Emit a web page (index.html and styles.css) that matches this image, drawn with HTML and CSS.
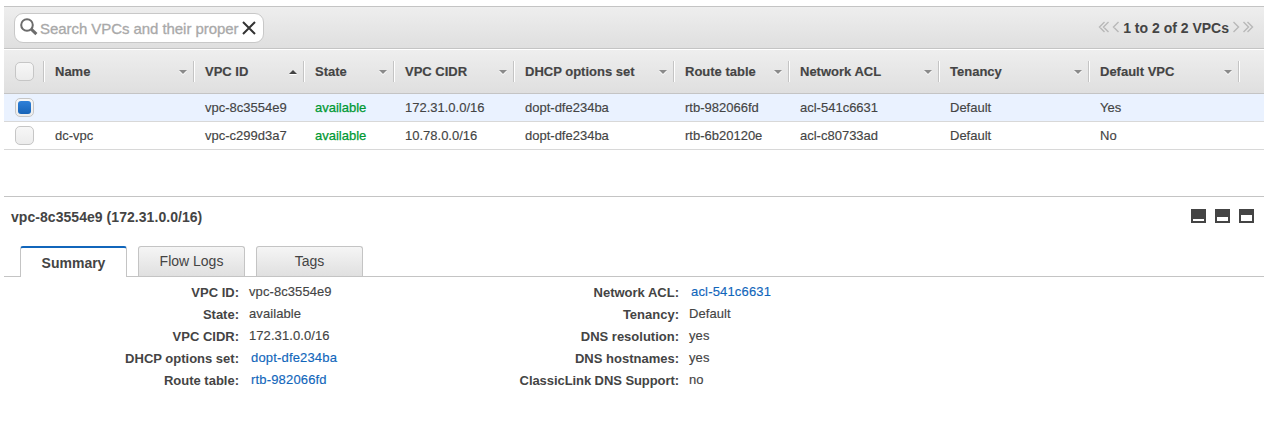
FILE: index.html
```html
<!DOCTYPE html>
<html lang="en">
<head>
<meta charset="utf-8">
<title>VPCs</title>
<link rel="stylesheet" href="styles.css">
</head>
<body>
<main class="console">
  <section class="toolbar">
    <div class="search">
      <svg class="search-icon" width="19" height="19" viewBox="0 0 19 19"><circle cx="7" cy="7" r="5.8" fill="none" stroke="#6c6c6c" stroke-width="2"/><path d="M11.2 11.2L16.4 16.2" stroke="#6c6c6c" stroke-width="3"/></svg>
      <span class="search-text">Search VPCs and their proper</span>
      <svg class="clear" width="14" height="14" viewBox="0 0 14 14"><path d="M1 1L13 13M13 1L1 13" stroke="#333" stroke-width="2"/></svg>
    </div>
    <div class="pager">
      <svg width="22" height="12" viewBox="0 0 22 12" fill="none" stroke="#b8b8b8" stroke-width="1.4"><path d="M6.500 1L1.500 6L6.500 11M10.500 1L5.500 6L10.500 11M20.500 1L15.500 6L20.500 11"/></svg>
      <span class="range">1 to 2 of 2 VPCs</span>
      <svg width="22" height="12" viewBox="0 0 22 12" fill="none" stroke="#b8b8b8" stroke-width="1.4"><path d="M1.500 1L6.500 6L1.500 11M11.500 1L16.500 6L11.500 11M15.500 1L20.500 6L15.500 11"/></svg>
    </div>
  </section>
  <section class="table">
    <div class="row head">
      <div class="cell"><i class="box"></i></div>
      <div class="cell"><span>Name</span><i class="arrow"></i></div>
      <div class="cell"><span>VPC ID</span><i class="arrow up"></i></div>
      <div class="cell"><span>State</span><i class="arrow"></i></div>
      <div class="cell"><span>VPC CIDR</span><i class="arrow"></i></div>
      <div class="cell"><span>DHCP options set</span><i class="arrow"></i></div>
      <div class="cell"><span>Route table</span><i class="arrow"></i></div>
      <div class="cell"><span>Network ACL</span><i class="arrow"></i></div>
      <div class="cell"><span>Tenancy</span><i class="arrow"></i></div>
      <div class="cell"><span>Default VPC</span><i class="arrow"></i></div>
    </div>
    <div class="row selected">
      <div class="cell"><i class="box checked"></i></div>
      <div class="cell"></div>
      <div class="cell">vpc-8c3554e9</div>
      <div class="cell ok">available</div>
      <div class="cell">172.31.0.0/16</div>
      <div class="cell">dopt-dfe234ba</div>
      <div class="cell">rtb-982066fd</div>
      <div class="cell">acl-541c6631</div>
      <div class="cell">Default</div>
      <div class="cell">Yes</div>
    </div>
    <div class="row">
      <div class="cell"><i class="box"></i></div>
      <div class="cell">dc-vpc</div>
      <div class="cell">vpc-c299d3a7</div>
      <div class="cell ok">available</div>
      <div class="cell">10.78.0.0/16</div>
      <div class="cell">dopt-dfe234ba</div>
      <div class="cell">rtb-6b20120e</div>
      <div class="cell">acl-c80733ad</div>
      <div class="cell">Default</div>
      <div class="cell">No</div>
    </div>
  </section>
  <section class="details">
    <header class="details-head">
      <span class="title">vpc-8c3554e9 (172.31.0.0/16)</span>
      <div class="panes"><i class="pane small"></i><i class="pane medium"></i><i class="pane large"></i></div>
    </header>
    <nav class="tabs">
      <div class="tab active">Summary</div>
      <div class="tab">Flow Logs</div>
      <div class="tab">Tags</div>
    </nav>
    <div class="summary">
      <dl class="props">
        <dt>VPC ID:</dt><dd>vpc-8c3554e9</dd>
        <dt>State:</dt><dd>available</dd>
        <dt>VPC CIDR:</dt><dd>172.31.0.0/16</dd>
        <dt>DHCP options set:</dt><dd class="link">dopt-dfe234ba</dd>
        <dt>Route table:</dt><dd class="link">rtb-982066fd</dd>
      </dl>
      <dl class="props">
        <dt>Network ACL:</dt><dd class="link">acl-541c6631</dd>
        <dt>Tenancy:</dt><dd>Default</dd>
        <dt>DNS resolution:</dt><dd>yes</dd>
        <dt>DNS hostnames:</dt><dd>yes</dd>
        <dt class="tight">ClassicLink DNS Support:</dt><dd>no</dd>
      </dl>
    </div>
  </section>
</main>
</body>
</html>
```
FILE: styles.css
```css
* { box-sizing: border-box; }
body {
  margin: 0;
  background: #fff;
  color: #444;
  font: 13px/16px "Liberation Sans", Arial, sans-serif;
  overflow: hidden;
}
.console { padding: 6px 8px 0 4px; height: 430px; }
.toolbar {
  display: flex;
  align-items: flex-start;
  justify-content: space-between;
  height: 43px;
  padding: 6px 10px 0;
  border-top: 1px solid #c4c4c4;
  border-bottom: 1px solid #c4c4c4;
  background: linear-gradient(#eee, #dfdfdf);
}
.search {
  display: flex;
  align-items: center;
  width: 250px;
  height: 30px;
  padding: 0 7px 1px 5px;
  border: 1px solid #c8c8c8;
  border-radius: 9px;
  background: #fff;
}
.search-icon { flex: none; }
.search-text {
  width: 199px;
  margin: 2px 3px 0 1px;
  white-space: nowrap;
  color: #a9a9a9;
  font-size: 15px;
  line-height: 20px;
  letter-spacing: -0.06px;
  -webkit-text-stroke: 0.3px;
}
.clear { flex: none; }
.pager { display: flex; align-items: center; gap: 3px; height: 28px; }
.range { font-size: 14px; font-weight: bold; white-space: nowrap; padding-top: 2px; }
.table { margin-top: 1px; }
.row {
  display: grid;
  grid-template-columns: 40px 150px 110px 90px 120px 160px 115px 150px 150px 150px;
  align-items: center;
  height: 28px;
  border-bottom: 1px solid #d8d8d8;
}
.cell { padding-left: 11px; white-space: nowrap; -webkit-text-stroke: 0.15px; }
.selected { background: #eaf2ff; }
.ok { color: #093; -webkit-text-stroke: 0.25px; }
.head {
  height: 44px;
  border-bottom-color: #c4c4c4;
  background: linear-gradient(#eee, #dfdfdf);
  font-weight: bold;
}
.head .cell {
  display: flex;
  align-items: center;
  justify-content: space-between;
  height: 21px;
  padding-right: 6px;
  border-right: 1px solid #c4c4c4;
  box-shadow: 1px 0 #fff;
}
.arrow {
  border: 4px solid transparent;
  border-top-color: #8a8a8a;
  border-bottom: 0;
  filter: drop-shadow(0 1px #fff);
}
.arrow.up { border-top: 0; border-bottom: 4px solid #444; }
.box {
  display: block;
  flex: none;
  width: 19px;
  height: 19px;
  border: 1px solid #c6c6c6;
  border-radius: 5px;
  background: linear-gradient(#f7f7f7, #ececec);
}
.checked { padding: 2px; }
.checked::before {
  content: "";
  display: block;
  height: 13px;
  border-radius: 3px;
  background: linear-gradient(#2f80d8, #1663b8);
}
.details { margin-top: 46px; border-top: 1px solid #c4c4c4; }
.details-head { display: flex; justify-content: space-between; height: 49px; padding: 12px 10px 0 7px; }
.title { font-size: 14px; font-weight: bold; letter-spacing: 0.05px; }
.panes { display: flex; gap: 9px; }
.pane { width: 15px; height: 14px; border: 2px solid #444; background: #fff; }
.small { border-top-width: 10px; }
.medium { border-top-width: 8px; }
.large { border-top-width: 6px; }
.tabs { display: flex; gap: 11px; height: 31px; padding-left: 16px; border-bottom: 1px solid #c4c4c4; }
.tab {
  width: 107px;
  height: 30px;
  border: 1px solid #c4c4c4;
  border-bottom: 0;
  border-radius: 3px 3px 0 0;
  background: linear-gradient(#f5f5f5, #e0e0e0);
  text-align: center;
  font-size: 14px;
  line-height: 29px;
}
.active {
  height: 31px;
  border-top: 2px solid #1166bb;
  background: #fff;
  font-weight: bold;
  line-height: 31px;
}
.summary { display: flex; padding-top: 5px; }
.props {
  display: grid;
  grid-template-columns: 235px 195px;
  column-gap: 10px;
  grid-auto-rows: 22px;
  margin: 0;
  line-height: 20px;
}
.props dt { font-weight: bold; text-align: right; padding-top: 1px; white-space: nowrap; }
.props dd { margin: 0; letter-spacing: 0.08px; -webkit-text-stroke: 0.15px; }
.props .tight { letter-spacing: -0.07px; }
.props .link { padding-left: 2px; color: #1166bb; letter-spacing: 0.17px; }
```
